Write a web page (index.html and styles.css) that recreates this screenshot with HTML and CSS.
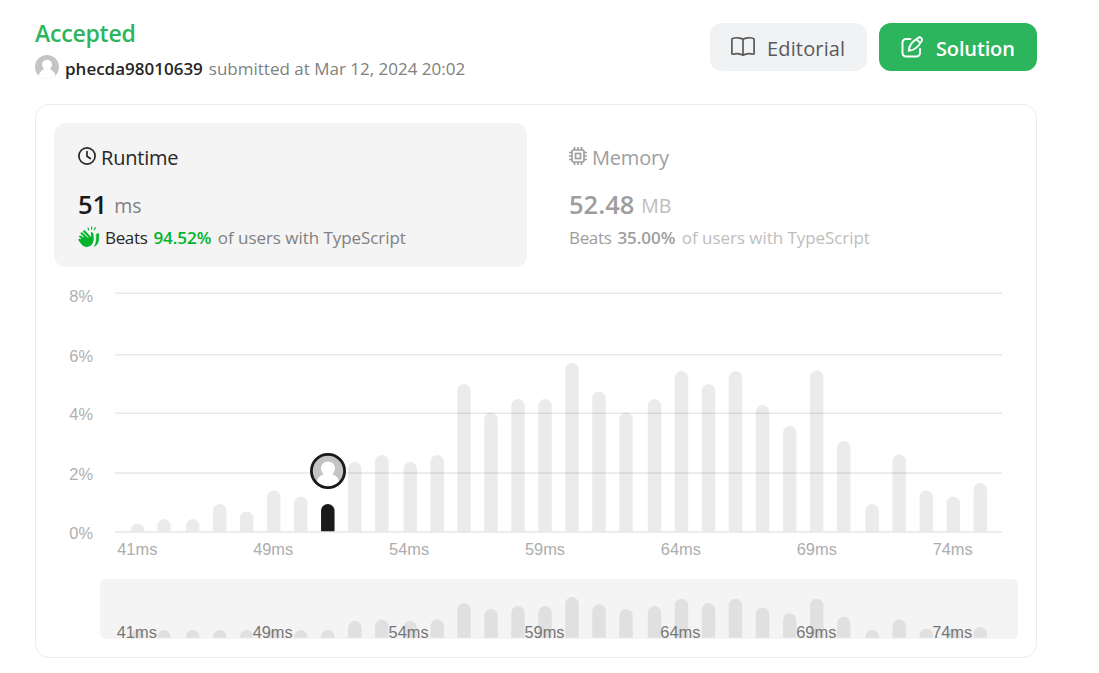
FILE: index.html
```html
<!DOCTYPE html>
<html lang="en">
<head>
<meta charset="utf-8">
<title>Submission result</title>
<link rel="stylesheet" href="styles.css">
</head>
<body>
<main class="page">
  <header class="header">
    <div class="summary">
      <h1 class="status"><span>Accepted</span></h1>
      <div class="byline">
        <svg class="avatar" viewBox="0 0 24 24"><defs><clipPath id="face"><circle cx="12" cy="12" r="12"/></clipPath></defs><g clip-path="url(#face)"><rect width="24" height="24" fill="#c4c4c4"/><circle cx="12" cy="9.800" r="5" fill="#fff"/><path d="M2.500 24c1-5.500 3.500-9 7-10h5c3.500 1 6 4.500 7 10z" fill="#fff"/></g></svg>
        <span class="user">phecda98010639</span>
        <span class="when">submitted at Mar 12, 2024 20:02</span>
      </div>
    </div>
    <div class="actions">
      <button class="btn btn-plain"><svg class="btn-icon" viewBox="0 0 24 24" fill="none" stroke="currentColor" stroke-width="1.700" stroke-linejoin="round"><path d="M12 4.200C9.500 2.500 4.500 2.400 1.500 3.500a.8.8 0 0 0-.6.800v14.200c0 .5.400.8.900.7 3-.8 7.500-.7 10.200 1.100 2.700-1.800 7.200-1.900 10.200-1.100.5.100.9-.2.900-.7V4.300a.8.8 0 0 0-.6-.8c-3-1.100-8-1-10.500.7zM12 4.200v16"/></svg><span class="btn-label">Editorial</span></button>
      <button class="btn btn-green"><svg class="btn-icon" viewBox="0 0 24 24" fill="none" stroke="currentColor" stroke-width="1.900" stroke-linecap="round" stroke-linejoin="round"><path d="M10.500 4H6a3.500 3.500 0 0 0-3.500 3.500v10.500A3.500 3.500 0 0 0 6 21.500h10.500A3.500 3.500 0 0 0 20 18v-4"/><path d="M18 3.200a2.300 2.300 0 0 1 3.400 3.200c-2.600 4.700-6.500 9-12.600 9.300.2-6.300 4.400-9.800 9.200-12.500zM16.500 4.300l3.600 3.600"/></svg><span class="btn-label">Solution</span></button>
    </div>
  </header>

  <section class="card">
    <div class="tabs">
      <div class="tab tab-active">
        <div class="tab-title"><svg class="tab-icon" viewBox="0 0 18 18" fill="none" stroke="currentColor" stroke-width="1.700" stroke-linecap="round" stroke-linejoin="round"><circle cx="9" cy="9" r="8.100"/><path d="M9 4.500v4.800l3.300 2.200"/></svg><span>Runtime</span></div>
        <div class="value"><b>51</b><span class="unit">ms</span></div>
        <div class="beats">
          <svg class="clap" viewBox="0 0 22 22" fill="none" stroke="currentColor" stroke-linecap="round"><path d="M3.700 7.300l6.800 6.600M6.200 5.300l6.500 7M2.200 10.500l7 6M1.400 13.800l6 4.200" stroke-width="2.100"/><path d="M5 11l7 1 1.300-1.300-.5-4c.9-.8 2.300-.1 2.500 1.200.5 3.500.9 6.800-.8 9.700-2.100 4-8 4.600-11 .7L1 15z" fill="currentColor" stroke="none"/><path d="M20.700 8c.2 6 .2 10.500-4.500 12.400 2-3 2.200-5.800 2.100-11.700.5-1 1.800-1.600 2.400-.7z" fill="currentColor" stroke="currentColor" stroke-width=".5"/><path d="M10 2l.7 2M13.600.9v2.200M17.400 1.700l-1.200 2" stroke-width="1.100"/></svg>
          <span class="label">Beats</span><b>94.52%</b><span class="rest">of users with TypeScript</span>
        </div>
      </div>
      <div class="tab tab-idle">
        <div class="tab-title"><svg class="tab-icon" viewBox="0 0 18 18" fill="none" stroke="currentColor" stroke-width="1.700"><rect x="3" y="3" width="12" height="12" rx="1.500"/><rect x="6.500" y="6.500" width="5" height="5"/><path d="M5.500 0v3M9 0v3M12.500 0v3M5.500 15v3M9 15v3M12.500 15v3M0 5.500h3M0 9h3M0 12.500h3M15 5.500h3M15 9h3M15 12.500h3"/></svg><span>Memory</span></div>
        <div class="value"><b>52.48</b><span class="unit">MB</span></div>
        <div class="beats"><span class="label">Beats</span><b>35.00%</b><span class="rest">of users with TypeScript</span></div>
      </div>
    </div>
    <svg class="chart" viewBox="36 267 1000 390">
      <rect class="brush" x="100" y="579" width="918" height="60" rx="6"/>
      <path class="grid" d="M115 293.200h887M115 354.700h887M115 413.200h887M115 472.900h887M115 531.900h887"/>
      <g id="bars"></g>
      <g class="ylabels"><text x="93" y="301.500">8%</text><text x="93" y="361.500">6%</text><text x="93" y="420">4%</text><text x="93" y="480">2%</text><text x="93" y="539">0%</text></g>
      <g class="xlabels" id="xlabels"></g>
      <g transform="translate(328 471)"><circle r="17.500" fill="#c4c4c4"/><circle cy="-2.500" r="7" fill="#fff"/><path d="M-11.500 12c1-6 4.500-8 8-9h7c3.500 1 7 3 8 9a16 16 0 0 1-23 0z" fill="#fff"/><circle r="16.600" fill="none" stroke="#1a1a1a" stroke-width="2.800"/></g>
    </svg>
  </section>
</main>
<script src="chart.js"></script>
</body>
</html>
```
FILE: styles.css
```css
* { box-sizing: border-box; }
body { margin: 0; background: #fff; font-family: "Open Sans", "Noto Sans", sans-serif; color: #262626; }
.page { width: 1037px; padding: 23px 0 0 35px; }
.header { display: flex; justify-content: space-between; height: 81px; }
.status { margin: -5px 0 0; font-size: 23px; line-height: 30px; font-weight: 650; color: #2db55d; letter-spacing: -0.2px; }
.byline { display: flex; align-items: center; height: 24px; margin-top: 8px; font-size: 17px; white-space: nowrap; }
.avatar { width: 24px; height: 24px; margin: 0 6px 3px 0; flex: none; }
.user { font-weight: 600; margin-right: 6px; }
.when { color: #808080; }
.actions { display: flex; gap: 12px; }
.btn { display: flex; align-items: center; height: 48px; border: 0; border-radius: 12px; padding: 0 0 0 21px; font: 600 20px/28px "Open Sans", "Noto Sans", sans-serif; }
.btn-plain { width: 157px; background: #f1f2f4; color: #5a5a5a; font-weight: 500; letter-spacing: 0.15px; }
.btn-green { width: 158px; background: #2db55d; color: #fff; font-weight: 650; letter-spacing: -0.15px; }
.btn-icon { width: 24px; height: 24px; margin-right: 12px; flex: none; }
.btn-label { padding-top: 3px; }
.card { height: 554px; border: 1px solid #ebebeb; border-radius: 14px; }
.tabs { display: flex; gap: 18px; height: 162px; padding: 18px 18px 0; }
.tab { width: 473px; height: 144px; padding: 20px 0 0 24px; border-radius: 12px; white-space: nowrap; }
.tab-active { background: #f4f4f4; }
.tab-idle { color: #9e9e9e; }
.tab-title { display: flex; align-items: center; height: 28px; font-size: 20px; letter-spacing: -0.2px; }
.tab-icon { width: 18px; height: 18px; margin: 0 5px 3px 0; }
.value { display: flex; align-items: baseline; height: 32px; margin-top: 17px; line-height: 32px; }
.value b { font-size: 25.5px; font-weight: 600; }
.unit { position: relative; top: -1px; margin-left: 7px; font-size: 19.5px; color: #808080; }
.beats { display: flex; align-items: center; height: 24px; margin-top: 5px; font-size: 17px; letter-spacing: -0.05px; }
.label { letter-spacing: -0.35px; }
.beats b { margin: 0 6.5px 0 6px; font-weight: 600; }
.tab-active b { color: #1a1a1a; }
.tab-active .beats b { color: #00b42a; }
.rest { color: #808080; }
.tab-idle .unit, .tab-idle .rest { color: #bdbdbd; }
.clap { width: 22px; height: 22px; margin-right: 5px; color: #00b42a; }
.chart { display: block; width: 1000px; height: 390px; font: 16.400px "Liberation Sans", Arial, sans-serif; }
.brush { fill: #f4f4f4; }
.grid { stroke: #e8e8e8; stroke-width: 1.500; }
.bar { fill: rgba(0, 0, 0, 0.08); }
.bar-current { fill: #1a1a1a; }
.ylabels { text-anchor: end; fill: #b0b0b0; }
.xlabels { text-anchor: middle; fill: #adadad; }
.xlabels .mini { fill: #777; }
```
FILE: chart.js
```js
// [center x, top in the main chart, top in the range preview]
const bars = [
  [137.5, 523.5, 630], [164, 519, 630], [192.7, 519, 630], [219.7, 504, 630],
  [246.7, 511.5, 630], [273.7, 490.5, 630], [300.8, 496.5, 630], [327.8, 504, 630],
  [354.8, 462, 621], [381.8, 455, 619.5], [410.3, 462, 621], [437.2, 455, 619.5],
  [464, 384, 603], [491, 412.5, 609], [518, 399, 606], [545, 399, 606],
  [572, 363, 597], [599, 391.5, 604.3], [626, 412.5, 609], [654.5, 399, 606],
  [681.5, 371, 598.7], [708.5, 384, 603], [735.5, 371, 598.7], [762.5, 405, 607.5],
  [789.7, 426, 613.3], [816.7, 370.5, 598.7], [843.7, 441, 616.7], [872.2, 504, 630],
  [899.2, 454.5, 619.5], [926.3, 490.5, 628.5], [953.3, 496.5, 628.5], [980.3, 483, 627]
];

function column(x, top, bottom) {
  const r = Math.min(6.75, bottom - top);
  return `M${x - 6.75} ${bottom}V${top + r}a6.75 ${r} 0 0 1 13.5 0V${bottom}z`;
}

document.getElementById('bars').innerHTML = bars.map(([x, top, mini], i) =>
  `<path class="${i === 7 ? 'bar-current' : 'bar'}" d="${column(x, top, 531.3)}"/>` +
  `<path class="bar" d="${column(x, mini, 637.7)}"/>`
).join('');

document.getElementById('xlabels').innerHTML = [41, 49, 54, 59, 64, 69, 74].map((ms, i) => {
  const x = 137.3 + i * 135.9;
  return `<text x="${x}" y="555">${ms}ms</text><text class="mini" x="${x - 0.5}" y="638">${ms}ms</text>`;
}).join('');
```
